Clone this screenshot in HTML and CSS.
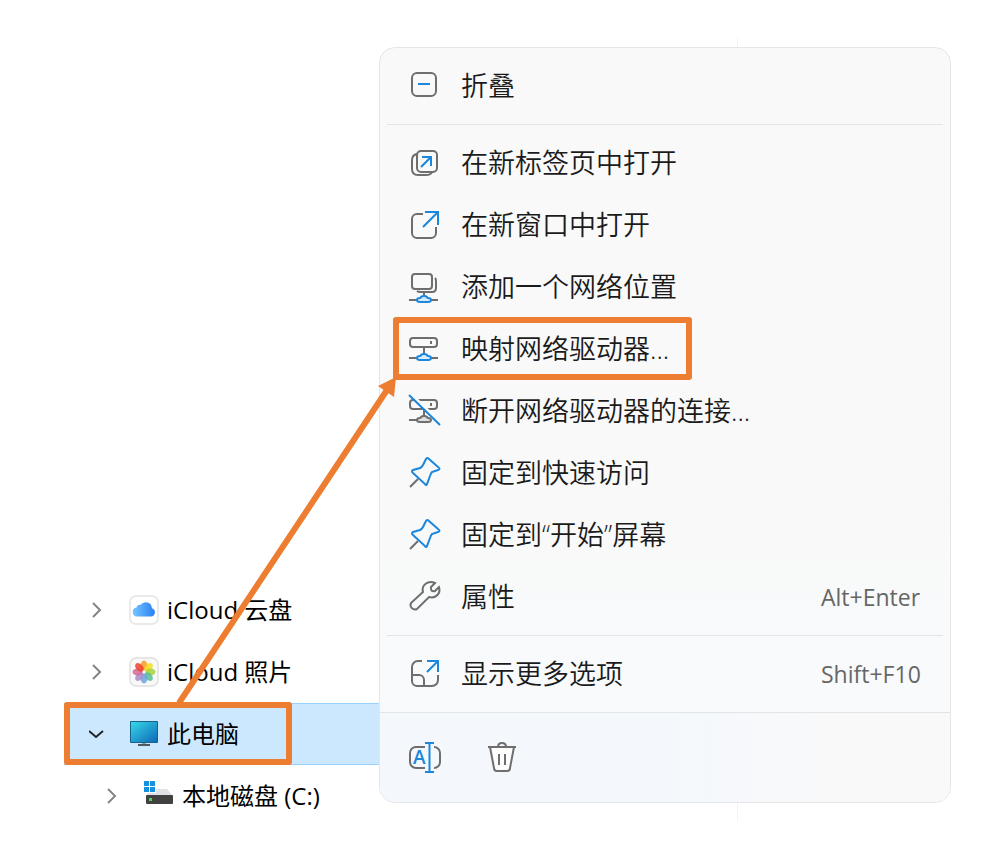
FILE: index.html
```html
<!DOCTYPE html>
<html lang="zh-CN">
<head>
    <meta charset="UTF-8">
    <meta name="viewport" content="width=device-width, initial-scale=1.0">
    <title>此电脑</title>
    <link rel="stylesheet" href="styles.css">
</head>
<body>
    <main class="window">
        <nav class="sidebar">
            <ul class="tree">
                <li class="tree-item">
                    <a href="#" class="tree-link">
                        <svg class="chevron" viewBox="0 0 16 16"><path d="M4 1l7 7-7 7"/></svg>
                        <svg class="tree-icon" viewBox="0 0 30 30">
                            <defs>
                                <linearGradient id="cloud" x1="0" y1="0" x2="1" y2="0">
                                    <stop offset="0" stop-color="#74c6fd"/>
                                    <stop offset="1" stop-color="#2a7ff5"/>
                                </linearGradient>
                            </defs>
                            <rect x="1" y="1" width="28" height="28" rx="6" fill="#fff" stroke="#e4e4e4" stroke-width="1.5"/>
                            <path d="M8 21.5a4.6 4.6 0 0 1-.6-9.1 3.6 3.6 0 0 1 4.3-2.6 6.2 6.2 0 0 1 11.2 3.4 4.3 4.3 0 0 1-.4 8.3z" fill="url(#cloud)"/>
                        </svg>
                        <span>iCloud 云盘</span>
                    </a>
                </li>
                <li class="tree-item">
                    <a href="#" class="tree-link">
                        <svg class="chevron" viewBox="0 0 16 16"><path d="M4 1l7 7-7 7"/></svg>
                        <svg class="tree-icon" viewBox="0 0 30 30">
                            <rect x="1" y="1" width="28" height="28" rx="6" fill="#f8f8f8" stroke="#dfdfdf" stroke-width="1.5"/>
                            <g fill-opacity=".85">
                                <ellipse cx="15" cy="8.5" rx="3.4" ry="5" fill="#fb9c22"/>
                                <ellipse cx="15" cy="8.5" rx="3.4" ry="5" fill="#f3dc1d" transform="rotate(45 15 15)"/>
                                <ellipse cx="15" cy="8.5" rx="3.4" ry="5" fill="#a8d23c" transform="rotate(90 15 15)"/>
                                <ellipse cx="15" cy="8.5" rx="3.4" ry="5" fill="#56bd98" transform="rotate(135 15 15)"/>
                                <ellipse cx="15" cy="8.5" rx="3.4" ry="5" fill="#6fa5dc" transform="rotate(180 15 15)"/>
                                <ellipse cx="15" cy="8.5" rx="3.4" ry="5" fill="#a48bcb" transform="rotate(225 15 15)"/>
                                <ellipse cx="15" cy="8.5" rx="3.4" ry="5" fill="#d56a95" transform="rotate(270 15 15)"/>
                                <ellipse cx="15" cy="8.5" rx="3.4" ry="5" fill="#f0402c" transform="rotate(315 15 15)"/>
                            </g>
                        </svg>
                        <span>iCloud 照片</span>
                    </a>
                </li>
                <li class="tree-item selected">
                    <a href="#" class="tree-link marked">
                        <svg class="chevron open" viewBox="0 0 16 16"><path d="M0 5l7 6 7-6"/></svg>
                        <svg class="tree-icon" viewBox="0 0 30 30">
                            <defs>
                                <linearGradient id="screen" x1="0" y1="0" x2="1" y2="1">
                                    <stop offset="0" stop-color="#35d8e6"/>
                                    <stop offset="1" stop-color="#0f68b8"/>
                                </linearGradient>
                            </defs>
                            <rect x="1" y="2" width="28" height="22" rx="1" fill="#17608f"/>
                            <rect x="2" y="3" width="26" height="20" fill="url(#screen)"/>
                            <path d="M13 24h4v2h-4z" fill="#8b9aa5"/>
                            <path d="M9 25h12v2H9z" fill="#4d5a64"/>
                        </svg>
                        <span>此电脑</span>
                    </a>
                    <svg class="arrow" viewBox="0 0 230 330">
                        <path d="M9 330L217 17" stroke="#ed7d31" stroke-width="6"/>
                        <path d="M226 4L224 24 208 13z" fill="#ed7d31"/>
                    </svg>
                </li>
                <li class="tree-item">
                    <a href="#" class="tree-link child">
                        <svg class="chevron" viewBox="0 0 16 16"><path d="M4 1l7 7-7 7"/></svg>
                        <svg class="tree-icon" viewBox="0 0 30 30">
                            <path d="M7 8h16l6 7H2z" fill="#dfe1e4"/>
                            <path d="M0 5h12v7H0z" fill="#fff"/>
                            <path d="M0 0h5v5H0zM6 0h5v5H6zM0 6h5v5H0zM6 6h5v5H6z" fill="#1492de"/>
                            <rect x="2" y="14" width="27" height="9" rx="1" fill="#414141"/>
                            <rect x="5" y="17" width="3" height="3" fill="#3be23b"/>
                        </svg>
                        <span>本地磁盘 (C:)</span>
                    </a>
                </li>
            </ul>
        </nav>

        <div class="menu">
            <div class="menu-section">
                <button class="menu-item">
                    <svg class="icon" viewBox="0 0 32 32">
                        <rect x="3" y="3" width="24" height="23" rx="5"/>
                        <path class="blue" d="M9 14h12"/>
                    </svg>
                    <span class="label">折叠</span>
                </button>
            </div>

            <div class="menu-section">
                <button class="menu-item">
                    <svg class="icon" viewBox="0 0 32 32">
                        <rect x="8" y="4" width="20" height="21" rx="4"/>
                        <path d="M8 7q-5 1-5 6v9q0 6 6 6h8q5 0 6-3"/>
                        <path class="blue" d="M12 20l10-10M13 10h9v9"/>
                    </svg>
                    <span class="label">在新标签页中打开</span>
                </button>
                <button class="menu-item">
                    <svg class="icon" viewBox="0 0 32 32">
                        <path d="M14 5H8a5 5 0 0 0-5 5v14a5 5 0 0 0 5 5h14a5 5 0 0 0 5-5v-6"/>
                        <path class="blue" d="M14 18L29 3M16 3h13v13"/>
                    </svg>
                    <span class="label">在新窗口中打开</span>
                </button>
                <button class="menu-item">
                    <svg class="icon" viewBox="0 0 32 32">
                        <rect x="3" y="3" width="20" height="15" rx="3"/>
                        <path d="M26 7q1 1 1 3v7q0 4-4 4H12q-3 0-4-1M15 21v4M0 29h8M21 29h8"/>
                        <path class="blue cap" d="M8 29q0-2 3-2 1 0 1-1 1-1 3-1t3 1q0 1 1 1 3 0 3 2 0 2-3 2h-8q-3 0-3-2z"/>
                    </svg>
                    <span class="label">添加一个网络位置</span>
                </button>
                <button class="menu-item marked">
                    <svg class="icon" viewBox="0 0 32 32">
                        <rect x="1" y="5" width="27" height="9" rx="3"/>
                        <path d="M15 14v7M0 25h8M21 25h8M22 8v3"/>
                        <path class="blue cap" d="M8 25q0-2 3-2 1 0 1-1 1-1 3-1t3 1q0 1 1 1 3 0 3 2 0 2-3 2h-8q-3 0-3-2z"/>
                    </svg>
                    <span class="label">映射网络驱动器...</span>
                </button>
                <button class="menu-item">
                    <svg class="icon" viewBox="0 0 32 32">
                        <rect x="1" y="5" width="27" height="9" rx="3"/>
                        <path d="M15 14v7M0 25h8M22 8v3"/>
                        <path class="cap" d="M8 25q0-2 3-2 1 0 1-1 1-1 3-1t3 1q0 1 1 1 3 0 3 2 0 2-3 2h-8q-3 0-3-2z"/>
                        <path class="cutout" d="M2 -1L33 29"/>
                        <path class="blue" d="M0 0l31 30"/>
                    </svg>
                    <span class="label">断开网络驱动器的连接...</span>
                </button>
                <button class="menu-item">
                    <svg class="icon" viewBox="0 0 32 32">
                        <path class="blue" d="M17 2q1-2 3 0l9 8q3 2 0 3l-6 2q-1 1-2 4l-3 8q-1 2-2 0L4 16q-2-2 0-3l7-2q2-1 3-3z"/>
                        <path d="M9 22l-8 8"/>
                    </svg>
                    <span class="label">固定到快速访问</span>
                </button>
                <button class="menu-item">
                    <svg class="icon" viewBox="0 0 32 32">
                        <path class="blue" d="M17 2q1-2 3 0l9 8q3 2 0 3l-6 2q-1 1-2 4l-3 8q-1 2-2 0L4 16q-2-2 0-3l7-2q2-1 3-3z"/>
                        <path d="M9 22l-8 8"/>
                    </svg>
                    <span class="label">固定到“开始”屏幕</span>
                </button>
                <button class="menu-item">
                    <svg class="icon" viewBox="0 0 32 32">
                        <path d="M26 2l-4 4q-1 5 4 4l4-4C32 12 27 18 20 16L8 28a4.5 4.5 0 0 1-6-6l12-11C12 4 19-1 26 2z"/>
                    </svg>
                    <span class="label">属性</span>
                    <kbd class="shortcut">Alt+Enter</kbd>
                </button>
            </div>

            <div class="menu-section wide">
                <button class="menu-item">
                    <svg class="icon" viewBox="0 0 32 32">
                        <path d="M13 3H9a6 6 0 0 0-6 6v14a5 5 0 0 0 5 5h15a6 6 0 0 0 6-6v-5M3 17h7a5 5 0 0 1 5 5v6"/>
                        <path class="blue" d="M18 14L29 3M18 3h11v11"/>
                    </svg>
                    <span class="label">显示更多选项</span>
                    <kbd class="shortcut">Shift+F10</kbd>
                </button>
            </div>

            <div class="menu-bar">
                <button class="bar-button" aria-label="重命名">
                    <svg class="icon" viewBox="0 0 32 32">
                        <path d="M16 5H7a6 6 0 0 0-6 6v9a6 6 0 0 0 6 6h9M25 5a6 6 0 0 1 6 6v9a6 6 0 0 1-6 6"/>
                        <path class="blue" d="M16 1h9M16 30h9M20.5 1v29"/>
                        <text class="letter" x="4" y="22">A</text>
                    </svg>
                </button>
                <button class="bar-button" aria-label="删除">
                    <svg class="icon" viewBox="0 0 32 32">
                        <path class="filled" d="M4 5l4 21q0 3 3 3h10q3 0 3-3l4-21z"/>
                        <path d="M2 5h28M12 5q0-4 4-4t4 4M13 12v11M19 12v11"/>
                    </svg>
                </button>
            </div>
        </div>
    </main>
</body>
</html>
```
FILE: styles.css
```css
* {
    box-sizing: border-box;
}

body {
    margin: 0;
    background-color: #fff;
    color: #1b1b1b;
    font-family: "Open Sans", "Noto Sans CJK SC", sans-serif;
}

button {
    padding: 0;
    border: none;
    background: none;
    color: inherit;
    font-family: inherit;
    cursor: pointer;
}

.window {
    display: grid;
    grid-template-columns: 379px 1fr;
    padding: 47px 41px 0 0;
}

/* Folder tree */
.sidebar {
    align-self: end;
}

.tree {
    margin: 0;
    padding: 0 0 0 64px;
    list-style: none;
}

.tree-item {
    position: relative;
}

.tree-link {
    display: flex;
    align-items: center;
    height: 62px;
    padding-left: 25px;
    color: #000;
    font-size: 24px;
    line-height: 32px;
    white-space: nowrap;
    text-decoration: none;
}

.tree-link.child {
    padding-left: 40px;
}

.selected {
    background-color: #cce8ff;
    box-shadow: inset 0 1px #99d1ff, inset 0 -1px #99d1ff;
}

.chevron {
    width: 16px;
    height: 16px;
    margin-right: 24px;
    fill: none;
    stroke: #858585;
    stroke-width: 2;
}

.chevron.open {
    stroke: #222;
}

.tree-icon {
    width: 30px;
    height: 30px;
    margin-right: 8px;
}

.arrow {
    position: absolute;
    left: 106px;
    bottom: 100%;
    z-index: 2;
    width: 230px;
    height: 330px;
    fill: none;
    pointer-events: none;
}

/* Orange frames */
.marked {
    position: relative;
}

.marked::after {
    content: "";
    position: absolute;
    top: -1px;
    bottom: 0;
    left: 0;
    box-sizing: border-box;
    width: 228px;
    border: 6px solid #ed7d31;
    border-radius: 3px;
}

.menu-item.marked::after {
    left: 13px;
    width: 299px;
}

/* Context menu */
.menu {
    position: relative;
    margin-bottom: 24px;
    border: 1px solid #e4e6e8;
    border-radius: 16px;
    background: linear-gradient(to bottom, #f9f9f9 60%, #f8fafc 88%);
}

.menu::before {
    content: "";
    position: absolute;
    top: -10px;
    bottom: -19px;
    left: 357px;
    z-index: -1;
    width: 1px;
    background-color: #f3f3f3;
}

.menu-section {
    position: relative;
    padding: 7px 0 8px;
}

.menu-section::after {
    content: "";
    position: absolute;
    right: 7px;
    bottom: 0;
    left: 7px;
    height: 1px;
    background-color: #e3e4e6;
}

.menu-section.wide::after {
    right: 0;
    left: 0;
}

.menu-item {
    display: flex;
    align-items: center;
    width: 100%;
    height: 62px;
    padding-left: 29px;
    font-size: 27px;
    line-height: 38px;
    text-align: left;
    white-space: nowrap;
}

.label {
    flex: 1;
    margin-left: 20px;
    font-weight: 350;
}

.shortcut {
    width: 129px;
    color: #666;
    font-family: inherit;
    font-size: 23px;
}

.menu-bar {
    display: flex;
    align-items: center;
    gap: 45px;
    height: 89px;
    padding-left: 29px;
    border-radius: 0 0 15px 15px;
    background: linear-gradient(to right, #f4f8fc 50%, #f9f9fa 80%);
}

.bar-button {
    height: 32px;
}

/* Icons */
.icon {
    display: block;
    flex: none;
    width: 32px;
    height: 32px;
    overflow: visible;
    fill: none;
    stroke: #6e6e6e;
    stroke-width: 2;
}

.icon .cap {
    fill: #e0e0e0;
}

.icon .blue {
    stroke: #1a86dc;
}

.icon .blue.cap {
    fill: #d9eefc;
}

.icon .cutout {
    stroke: #f9f9f9;
    stroke-width: 3;
}

.icon .filled {
    fill: #fdfdfd;
}

.icon .letter {
    fill: #1a86dc;
    stroke: none;
    font-size: 19px;
    font-weight: 600;
}
```
